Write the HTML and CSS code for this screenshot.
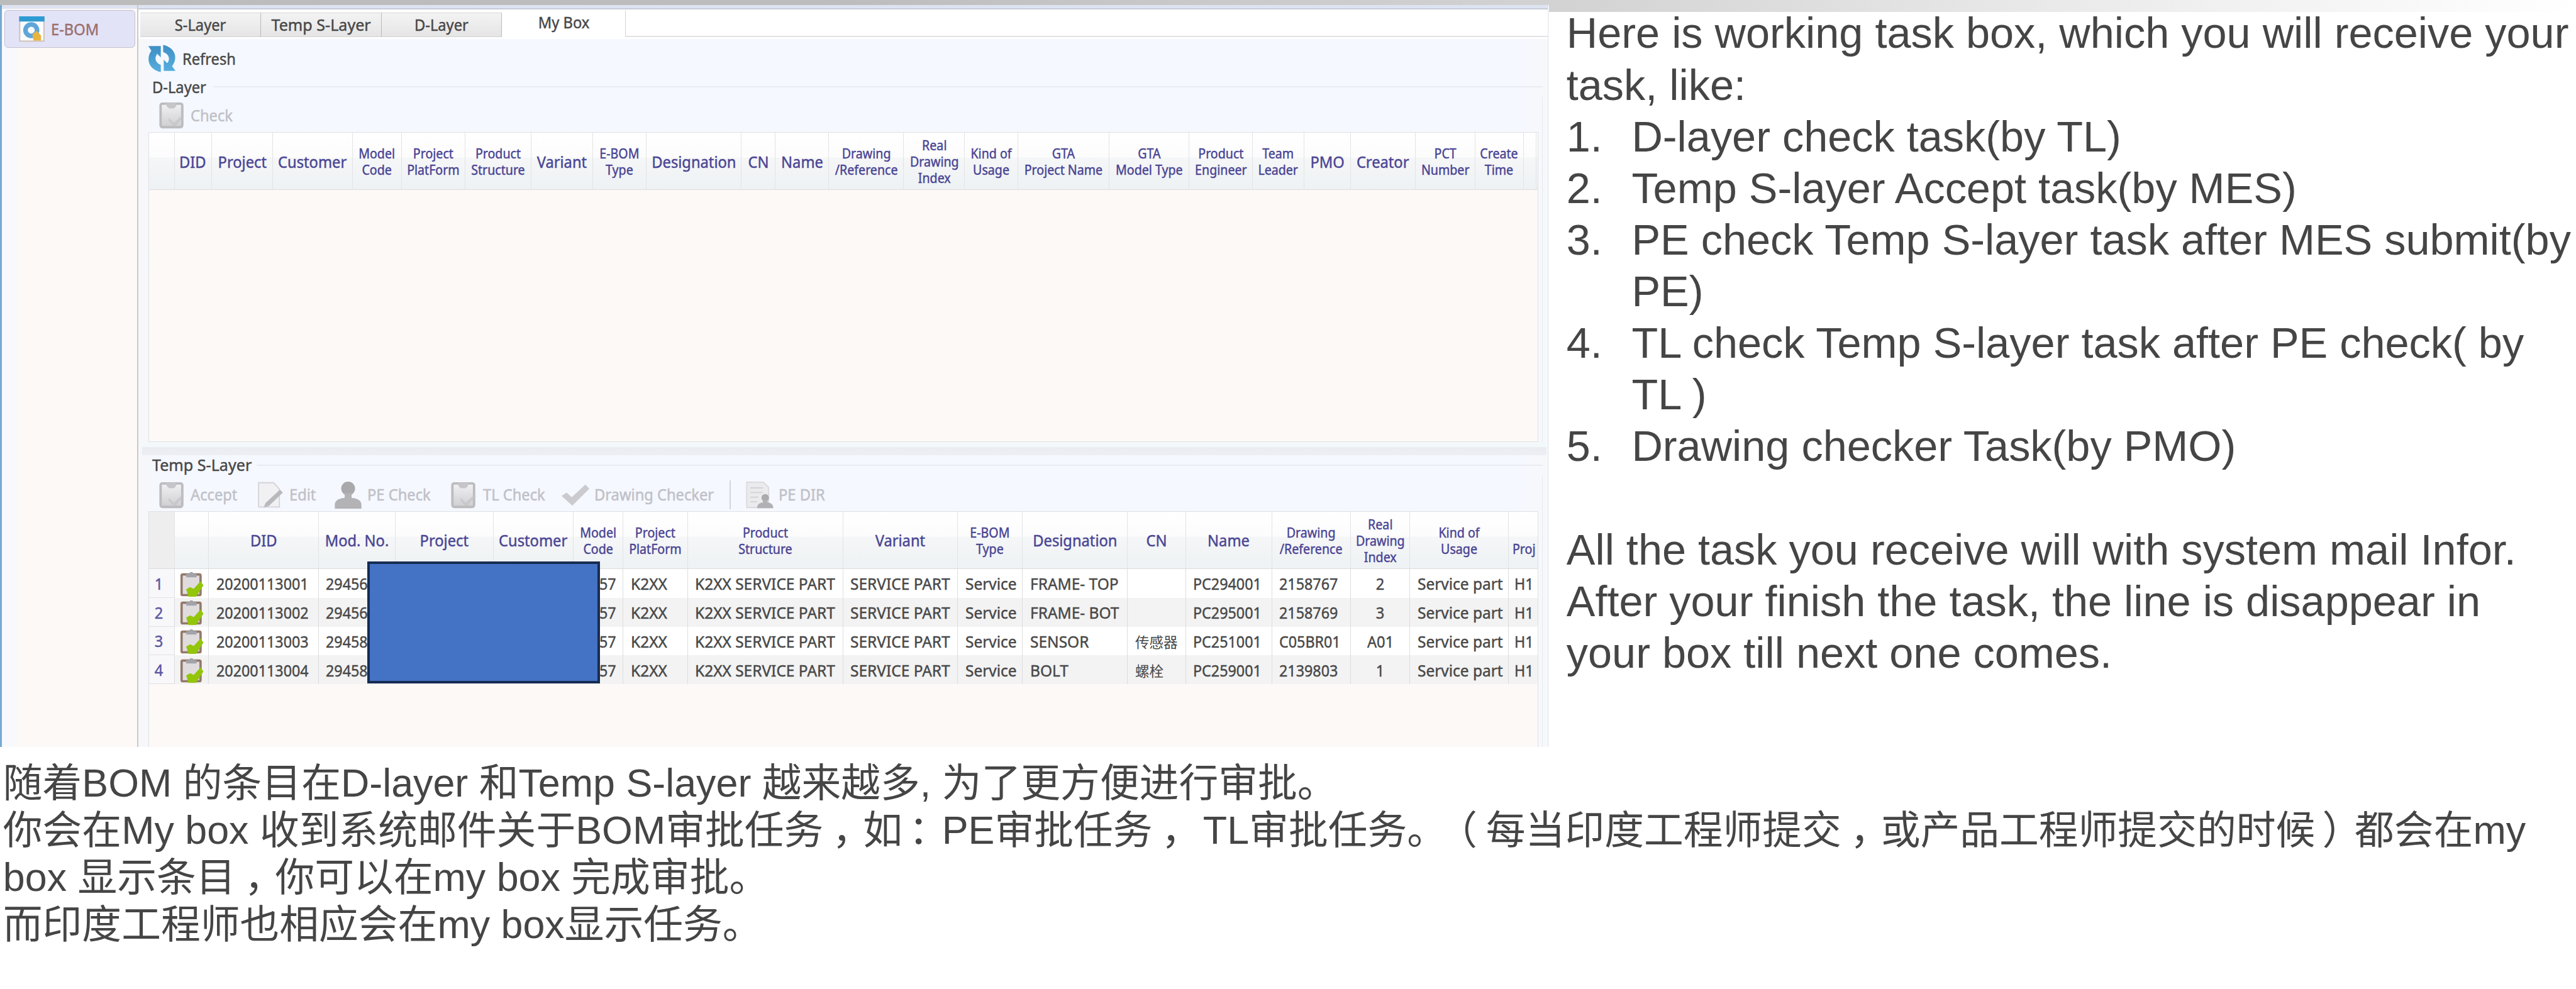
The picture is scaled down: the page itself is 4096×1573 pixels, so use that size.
FILE: index.html
```html
<!DOCTYPE html>
<html lang="zh-CN">
<head>
<meta charset="utf-8">
<title>E-BOM My Box</title>
<link rel="stylesheet" href="styles.css">
</head>
<body>
<svg class="defs" aria-hidden="true">
  <defs>
    <linearGradient id="gPaper" x1="0" y1="0" x2="0" y2="1"><stop offset="0" stop-color="#f1f1f4"/><stop offset="1" stop-color="#cfcfd2"/></linearGradient>
    <linearGradient id="gBlue" x1="0" y1="0" x2="0" y2="1"><stop offset="0" stop-color="#3f8fc4"/><stop offset="1" stop-color="#55aede"/></linearGradient>
  </defs>
  <symbol id="clip-grey" viewBox="0 0 44 46">
    <rect x="3" y="4" width="36" height="39" rx="3" fill="url(#gPaper)" stroke="#bcbcc0" stroke-width="4"/>
    <path d="M13 3h16v5l-4 4h-8l-4-4z" fill="#c6c6ca"/>
    <path d="M17 28l8 8 15-14 2 3-16 18-10-11z" fill="#c3c3c6" opacity=".7"/>
  </symbol>
  <symbol id="clip-green" viewBox="0 0 42 44">
    <rect x="3" y="5" width="33" height="36" rx="2" fill="#e0dcde" stroke="#94796a" stroke-width="4"/>
    <path d="M11 4h5l2-3h4l2 3h5v6H11z" fill="#a3a3aa"/>
    <path d="M11 31l7-4 6 3 12-13 5 7-13 20H15z" fill="#93c50b"/>
  </symbol>
  <symbol id="edit" viewBox="0 0 46 48">
    <path d="M3 3h26l10 11v31H3z" fill="#f1f1f4" stroke="#d4d4d8" stroke-width="2"/>
    <path d="M40 15l5 5-24 23-9 3 3-8z" fill="#b9b9bd"/>
  </symbol>
  <symbol id="person" viewBox="0 0 48 48">
    <ellipse cx="24" cy="13" rx="12" ry="12" fill="#a9a9ab"/>
    <path d="M18 21h12v8c9 1 17 4 17 12v7H1v-7c0-8 8-11 17-12z" fill="#b3b3b6"/>
  </symbol>
  <symbol id="tick" viewBox="0 0 50 38">
    <path d="M1 21l9-6 9 8L43 1l7 7-30 30z" fill="#cbcbcf"/>
  </symbol>
  <symbol id="dir" viewBox="0 0 48 48">
    <path d="M2 2h29l9 9v35H2z" fill="#ebebee" stroke="#dadade" stroke-width="2"/>
    <path d="M8 12h22M8 20h22M8 28h14M8 36h12" stroke="#d3d3d7" stroke-width="2"/>
    <circle cx="34" cy="29" r="6.500" fill="#ababae"/>
    <path d="M30 33h8v4c6 1 10 4 10 10H20c0-6 4-9 10-10z" fill="#b1b1b5"/>
  </symbol>
</svg>

<div class="top">
  <section class="app">
    <aside class="side">
      <div class="side-item">
        <svg class="ico-app" viewBox="0 0 44 44">
          <rect x="1" y="1" width="42" height="42" fill="#fbfbfd" stroke="#cdbfb4" stroke-width="2"/>
          <rect x="0" y="0" width="44" height="9" fill="#2f9bd2"/>
          <circle cx="21" cy="24" r="10" fill="none" stroke="#5ea6da" stroke-width="8"/>
          <path d="M23 32l7-7 8 8v9H25z" fill="#eab53e"/>
        </svg>
        <span class="t">E-BOM</span>
      </div>
    </aside>
    <main class="main">
      <div class="strip"></div>
      <nav class="tabs">
        <div class="tab"><span class="t">S-Layer</span></div>
        <div class="tab"><span class="t wide">Temp S-Layer</span></div>
        <div class="tab"><span class="t">D-Layer</span></div>
        <div class="tab active"><span class="t">My Box</span></div>
        <div class="tab-rest"></div>
      </nav>
      <div class="panel">
        <div class="refresh">
          <svg class="ico-refresh" viewBox="0 0 48 48">
            <path d="M1 3h21v19l-6-6c-5 6-4 15 6 19v12C2 43-4 25 6 11z" fill="url(#gBlue)"/>
            <path d="M47 45H27V26l6 6c5-6 4-15-7-19V1c20 4 26 22 15 36z" fill="url(#gBlue)"/>
          </svg>
          <span class="t left">Refresh</span>
        </div>

        <div class="legend"><span class="t left">D-Layer</span><i class="rule short"></i></div>
        <div class="group one">
          <div class="tools">
            <svg class="tool-ico"><use href="#clip-grey"/></svg><span class="t left">Check</span>
          </div>
          <div class="grid">
            <div class="row head cols-d">
              <div class="c"></div>
              <div class="c"><span class="t">DID</span></div>
              <div class="c"><span class="t">Project</span></div>
              <div class="c"><span class="t">Customer</span></div>
              <div class="c"><span class="t s">Model<br>Code</span></div>
              <div class="c"><span class="t s">Project<br>PlatForm</span></div>
              <div class="c"><span class="t s">Product<br>Structure</span></div>
              <div class="c"><span class="t">Variant</span></div>
              <div class="c"><span class="t s">E-BOM<br>Type</span></div>
              <div class="c"><span class="t">Designation</span></div>
              <div class="c"><span class="t">CN</span></div>
              <div class="c"><span class="t">Name</span></div>
              <div class="c"><span class="t s">Drawing<br>/Reference</span></div>
              <div class="c"><span class="t s">Real<br>Drawing<br>Index</span></div>
              <div class="c"><span class="t s">Kind of<br>Usage</span></div>
              <div class="c"><span class="t s">GTA<br>Project Name</span></div>
              <div class="c"><span class="t s">GTA<br>Model Type</span></div>
              <div class="c"><span class="t s">Product<br>Engineer</span></div>
              <div class="c"><span class="t s">Team<br>Leader</span></div>
              <div class="c"><span class="t">PMO</span></div>
              <div class="c"><span class="t">Creator</span></div>
              <div class="c"><span class="t s">PCT<br>Number</span></div>
              <div class="c"><span class="t s">Create<br>Time</span></div>
              <div class="c"></div>
            </div>
          </div>
        </div>

        <div class="split"></div>
        <div class="legend two"><span class="t left wide">Temp S-Layer</span><i class="rule"></i></div>
        <div class="group last">
          <div class="tools">
            <svg class="tool-ico"><use href="#clip-grey"/></svg><span class="t left w-accept">Accept</span>
            <svg class="tool-ico"><use href="#edit"/></svg><span class="t left w-edit">Edit</span>
            <svg class="tool-ico"><use href="#person"/></svg><span class="t left w-pe">PE Check</span>
            <svg class="tool-ico"><use href="#clip-grey"/></svg><span class="t left w-tl">TL Check</span>
            <svg class="tool-ico"><use href="#tick"/></svg><span class="t left w-draw">Drawing Checker</span>
            <i class="sep"></i>
            <svg class="tool-ico"><use href="#dir"/></svg><span class="t left">PE DIR</span>
          </div>
          <div class="grid">
            <div class="row head cols-s">
              <div class="c corner"></div>
              <div class="c"></div>
              <div class="c"><span class="t">DID</span></div>
              <div class="c"><span class="t">Mod. No.</span></div>
              <div class="c"><span class="t">Project</span></div>
              <div class="c"><span class="t">Customer</span></div>
              <div class="c"><span class="t s">Model<br>Code</span></div>
              <div class="c"><span class="t s">Project<br>PlatForm</span></div>
              <div class="c"><span class="t s">Product<br>Structure</span></div>
              <div class="c"><span class="t">Variant</span></div>
              <div class="c"><span class="t s">E-BOM<br>Type</span></div>
              <div class="c"><span class="t">Designation</span></div>
              <div class="c"><span class="t">CN</span></div>
              <div class="c"><span class="t">Name</span></div>
              <div class="c"><span class="t s">Drawing<br>/Reference</span></div>
              <div class="c"><span class="t s">Real<br>Drawing<br>Index</span></div>
              <div class="c"><span class="t s">Kind of<br>Usage</span></div>
              <div class="c cut"><span class="t s left"><br>Proj</span></div>
            </div>
            <div class="row cols-s">
              <div class="c no"><span class="t">1</span></div>
              <div class="c mid"><svg class="ico-row"><use href="#clip-green"/></svg></div>
              <div class="c"><span class="n">20200113001</span></div>
              <div class="c"><span class="n">29456</span></div>
              <div class="c"></div><div class="c"></div>
              <div class="c code"><span class="n">57</span></div>
              <div class="c"><span class="b">K2XX</span></div>
              <div class="c"><span class="b">K2XX SERVICE PART</span></div>
              <div class="c"><span class="b">SERVICE PART</span></div>
              <div class="c"><span class="b">Service</span></div>
              <div class="c"><span class="b">FRAME- TOP</span></div>
              <div class="c"></div>
              <div class="c"><span class="n">PC294001</span></div>
              <div class="c"><span class="n">2158767</span></div>
              <div class="c mid"><span class="t">2</span></div>
              <div class="c"><span class="b">Service part</span></div>
              <div class="c cut"><span class="n">H1</span></div>
            </div>
            <div class="row alt cols-s">
              <div class="c no"><span class="t">2</span></div>
              <div class="c mid"><svg class="ico-row"><use href="#clip-green"/></svg></div>
              <div class="c"><span class="n">20200113002</span></div>
              <div class="c"><span class="n">29456</span></div>
              <div class="c"></div><div class="c"></div>
              <div class="c code"><span class="n">57</span></div>
              <div class="c"><span class="b">K2XX</span></div>
              <div class="c"><span class="b">K2XX SERVICE PART</span></div>
              <div class="c"><span class="b">SERVICE PART</span></div>
              <div class="c"><span class="b">Service</span></div>
              <div class="c"><span class="b">FRAME- BOT</span></div>
              <div class="c"></div>
              <div class="c"><span class="n">PC295001</span></div>
              <div class="c"><span class="n">2158769</span></div>
              <div class="c mid"><span class="t">3</span></div>
              <div class="c"><span class="b">Service part</span></div>
              <div class="c cut"><span class="n">H1</span></div>
            </div>
            <div class="row cols-s">
              <div class="c no"><span class="t">3</span></div>
              <div class="c mid"><svg class="ico-row"><use href="#clip-green"/></svg></div>
              <div class="c"><span class="n">20200113003</span></div>
              <div class="c"><span class="n">29458</span></div>
              <div class="c"></div><div class="c"></div>
              <div class="c code"><span class="n">57</span></div>
              <div class="c"><span class="b">K2XX</span></div>
              <div class="c"><span class="b">K2XX SERVICE PART</span></div>
              <div class="c"><span class="b">SERVICE PART</span></div>
              <div class="c"><span class="b">Service</span></div>
              <div class="c"><span class="b">SENSOR</span></div>
              <div class="c"><span class="cn">传感器</span></div>
              <div class="c"><span class="n">PC251001</span></div>
              <div class="c"><span class="n">C05BR01</span></div>
              <div class="c mid"><span class="t">A01</span></div>
              <div class="c"><span class="b">Service part</span></div>
              <div class="c cut"><span class="n">H1</span></div>
            </div>
            <div class="row alt cols-s">
              <div class="c no"><span class="t">4</span></div>
              <div class="c mid"><svg class="ico-row"><use href="#clip-green"/></svg></div>
              <div class="c"><span class="n">20200113004</span></div>
              <div class="c"><span class="n">29458</span></div>
              <div class="c"></div><div class="c"></div>
              <div class="c code"><span class="n">57</span></div>
              <div class="c"><span class="b">K2XX</span></div>
              <div class="c"><span class="b">K2XX SERVICE PART</span></div>
              <div class="c"><span class="b">SERVICE PART</span></div>
              <div class="c"><span class="b">Service</span></div>
              <div class="c"><span class="b">BOLT</span></div>
              <div class="c"><span class="cn">螺栓</span></div>
              <div class="c"><span class="n">PC259001</span></div>
              <div class="c"><span class="n">2139803</span></div>
              <div class="c mid"><span class="t">1</span></div>
              <div class="c"><span class="b">Service part</span></div>
              <div class="c cut"><span class="n">H1</span></div>
            </div>
          </div>
        </div>
      </div>
    </main>
    <div class="mask"></div>
  </section>

  <section class="notes" lang="en">
    <p>Here is working task box, which you will receive your<br>task, like:</p>
    <ol>
      <li><span>1.</span><span>D-layer check task(by TL)</span></li>
      <li><span>2.</span><span>Temp S-layer Accept task(by MES)</span></li>
      <li><span>3.</span><span>PE check Temp S-layer task after MES submit(by<br>PE)</span></li>
      <li><span>4.</span><span>TL check Temp S-layer task after PE check( by<br>TL )</span></li>
      <li><span>5.</span><span>Drawing checker Task(by PMO)</span></li>
    </ol>
    <p class="after">All the task you receive will with system mail Infor.<br>After your finish the task, the line is disappear in<br>your box till next one comes.</p>
  </section>
</div>

<section class="zh">
  <p>随着BOM 的条目在D-layer 和Temp S-layer 越来越多, 为了更方便进行审批。</p>
  <p>你会在My box 收到系统邮件关于BOM审批任务<i class="comma">，</i>如<i class="colon">：</i>PE审批任务<i class="comma">，</i> TL审批任务。<i class="open">（</i>每当印度工程师提交<i class="comma">，</i>或产品工程师提交的时候<i class="close">）</i>都会在my</p>
  <p>box 显示条目<i class="comma">，</i>你可以在my box 完成审批。</p>
  <p>而印度工程师也相应会在my box显示任务。</p>
</section>
</body>
</html>
```
FILE: styles.css
```css
/* 1rem = 100 design units; the design is 42.69 x 16.39 rem */
html { font-size: 95.948px; }
* { box-sizing: border-box; }
body {
  margin: 0;
  width: 42.69rem;
  height: 16.39rem;
  overflow: hidden;
  background: linear-gradient(90deg, #bcbcbc 0, #bdbdbd 33%, #c8c8c8 45%, #d2d2d2 60%, #ebebeb 81%, #f8f8f8 93%, #fff 100%) 0 0 / 100% .2rem no-repeat #fff;
  font-family: "Noto Sans", "Noto Sans CJK SC", sans-serif;
}
p, ol { margin: 0; padding: 0; list-style: none; }
i { font-style: normal; }
svg { display: block; overflow: visible; }
.defs { position: absolute; width: 0; height: 0; }

.top { display: flex; height: 12.38rem; }

/* application window */
.app {
  position: relative;
  display: flex;
  width: 25.67rem;
  height: 12.3rem;
  margin-top: .08rem;
  border-left: .04rem solid #77a9d2;
  background: #f7f8fb;
  font-size: .27rem;
  line-height: 1.2;
  color: #484848;
  white-space: nowrap;
}
.t, .b, .n { display: inline-block; flex: none; transform: scaleX(.915); -webkit-text-stroke: .005rem currentColor; }
.t.wide { transform: scaleX(.97); }
.b { transform: scaleX(.945); transform-origin: left; }
.n { transform: scaleX(.9); transform-origin: left; }
.t.left { transform-origin: left; }
.t.s { font-size: .22rem; line-height: .27rem; text-align: center; transform: scaleX(.93); }
.t.s.left { text-align: left; }

.side {
  width: 2.24rem;
  padding: .09rem .03rem 0 .04rem;
  background: linear-gradient(#dfe3f0 .06rem, transparent .06rem), linear-gradient(90deg, #f8f9fc .22rem, #fdf9f6 .28rem);
}
.side-item {
  display: flex;
  align-items: center;
  gap: .1rem;
  height: .62rem;
  padding-left: .23rem;
  border: .02rem solid #c5c1d2;
  border-radius: .06rem;
  background: #e3e3f8;
  color: #9a6f6c;
}
.side-item .t { transform-origin: left; }
.ico-app { width: .43rem; height: .42rem; }

.main {
  display: flex;
  flex-direction: column;
  width: 23.39rem;
  border-left: .03rem solid #c8c9ce;
  border-right: .02rem solid #e6e9ee;
}
.strip { height: .08rem; background: #dde3f0; border-bottom: .03rem solid #c5cbd9; }

.tabs { display: flex; align-items: flex-end; height: .46rem; padding-left: .03rem; background: #fff; }
.tab {
  display: flex;
  align-items: center;
  justify-content: center;
  width: 2rem;
  height: .41rem;
  border: .02rem solid #d5d5d5;
  border-right-color: #b9b9b9;
  border-left: 0;
  background: linear-gradient(#f4f3f3, #e6e5e5);
}
.tab.active { width: 2.05rem; height: .45rem; padding-bottom: .04rem; border-color: #fff #d4d4d4 #fff #fff; background: #fff; }
.tab-rest { flex: 1; height: .03rem; background: #e3e3e3; }

.panel {
  display: flex;
  flex-direction: column;
  flex: 1;
  padding: 0 .08rem 0 .12rem;
  border-top: .04rem solid #fff;
  background: linear-gradient(90deg, #f7f7f9 .06rem, #f5f8fe .3rem, #f5f8fe 98%, #f7f8fa);
}
.refresh { display: flex; align-items: center; gap: .1rem; height: .63rem; padding: .01rem 0 0 .04rem; }
.ico-refresh { width: .47rem; height: .48rem; }

.legend { display: flex; align-items: center; gap: .03rem; height: .32rem; padding-left: .11rem; }
.rule { flex: 1; height: .02rem; background: #e8ecf1; }
.legend.two { height: .34rem; }
.group {
  padding: 0 .07rem 0 .05rem;
  border-right: .02rem solid #e6e9f0;
}
.group.one { height: 5.73rem; }
.group.last { flex: 1; display: flex; flex-direction: column; }
.split { height: .21rem; margin: 0 -.06rem; background: linear-gradient(#f3f9fb .08rem, #e9ecf1 .09rem, #edeef3 .2rem); }

.tools { display: flex; align-items: center; height: .59rem; padding: .03rem 0 0 .15rem; color: #c0c0c7; }
.last .tools { height: .59rem; padding-top: .05rem; }
.tool-ico { flex: none; width: .47rem; height: .46rem; margin-right: .08rem; }
.w-accept { width: 1.08rem; }
.w-edit { width: .74rem; }
.w-pe { width: 1.37rem; }
.w-tl { width: 1.3rem; }
.w-draw { width: 2.24rem; }
.sep { width: .02rem; height: .48rem; margin-right: .24rem; background: #d5d5da; }

.grid { height: 5.14rem; overflow: hidden; border: .02rem solid #e0e1e4; background: #fdf9f7; }
.last .grid { flex: 1; height: auto; border-bottom: 0; }
.row { display: grid; height: .478rem; background: #fff; }
.row.alt { background: #f3f3f3; }
.cols-d { grid-template-columns: .42rem .62rem 1.01rem 1.32rem .82rem 1.05rem 1.09rem 1.025rem .885rem 1.58rem .56rem .89rem 1.24rem 1.01rem .88rem 1.51rem 1.33rem 1.05rem .85rem .78rem 1.065rem .995rem .8rem .21rem; }
.cols-s { grid-template-columns: .43rem .56rem 1.82rem 1.27rem 1.63rem 1.32rem .83rem 1.07rem 2.57rem 1.905rem 1.075rem 1.74rem .965rem 1.425rem 1.31rem .98rem 1.63rem .46rem; }
.c { display: flex; align-items: center; min-width: 0; padding: .02rem 0 0 .12rem; border-right: .02rem solid #dddddf; }
.c.mid, .c.no { justify-content: center; padding: .02rem 0 0; }
.c.no { background: #f8f8fb; color: #5b569f; border-bottom: .02rem solid #e2e2e6; padding-right: .1rem; }
.c.code { padding-left: .43rem; }
.row.head {
  height: .95rem;
  border-bottom: .02rem solid #dcdcde;
  background: linear-gradient(#fff, #fcfcfc 43%, #f5f6f7 45%, #eef2f4);
  color: #4a4594;
}
.head .c { justify-content: center; padding: .02rem 0 0; border-color: #e3e3e6; }
.head .corner { background: #eeeeef; }
.c.cut { justify-content: flex-start; padding-left: .1rem; border-right: 0; }
.head .c.cut { padding-left: .07rem; }
.ico-row { width: .4rem; height: .42rem; }
.cn { font-family: "Noto Sans CJK SC", sans-serif; font-size: .235rem; }

/* redaction block over the project data */
.mask {
  position: absolute;
  left: 6.06rem;
  top: 9.23rem;
  width: 3.85rem;
  height: 2.02rem;
  border: .05rem solid #172c51;
  background: #4472c4;
}

.notes {
  padding: .13rem 0 0 .29rem;
  font-family: "Liberation Sans", Arial, sans-serif;
  font-size: .7135rem;
  line-height: .856rem;
  color: #454545;
  white-space: nowrap;
}
.notes li { display: flex; }
.notes li span:first-child { width: 1.08rem; }
.notes .after { margin-top: .856rem; }

.zh {
  padding: .21rem 0 0 .05rem;
  font-family: "Liberation Sans", "Noto Sans CJK SC", sans-serif;
  font-size: .6545rem;
  line-height: .781rem;
  color: #454545;
  white-space: nowrap;
  text-spacing-trim: space-all;
}
.zh i { position: relative; }
.comma { left: .22em; }
.colon { left: .16em; }
.open { left: -.22em; }
.close { left: .18em; }
```
